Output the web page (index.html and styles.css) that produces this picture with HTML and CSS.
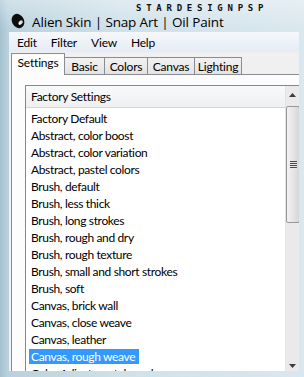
FILE: index.html
```html
<!DOCTYPE html>
<html>
<head>
<meta charset="utf-8">
<link rel="stylesheet" href="styles.css">
</head>
<body>
<div class="window">
  <div class="titlebar">
    <svg class="appicon" width="15" height="16" viewBox="0 0 15 16">
      <ellipse cx="7" cy="8" rx="6" ry="7.4" transform="rotate(-28 7 8)" fill="#0d0d0d"/>
      <ellipse cx="9.6" cy="9.6" rx="2.6" ry="1.8" transform="rotate(-45 9.6 9.6)" fill="#d9d9d9"/>
      <ellipse cx="9" cy="10.2" rx="1.2" ry="0.8" transform="rotate(-45 9 10.2)" fill="#fff"/>
    </svg>
    <span class="title">Alien Skin | Snap Art | Oil Paint</span>
    <span class="watermark">STARDESIGNPSP</span>
  </div>
  <div class="client">
    <div class="menubar">
      <span class="menu">Edit</span>
      <span class="menu">Filter</span>
      <span class="menu">View</span>
      <span class="menu">Help</span>
    </div>
    <div class="tabstrip">
      <div class="tab active w-settings">Settings</div>
      <div class="tab w-basic">Basic</div>
      <div class="tab w-colors">Colors</div>
      <div class="tab w-canvas">Canvas</div>
      <div class="tab w-lighting">Lighting</div>
    </div>
    <div class="panel">
      <div class="listbox">
        <div class="listmain">
          <div class="listhead">Factory Settings</div>
          <ul class="items">
            <li><span>Factory Default</span></li>
            <li><span>Abstract, color boost</span></li>
            <li><span>Abstract, color variation</span></li>
            <li><span>Abstract, pastel colors</span></li>
            <li><span>Brush, default</span></li>
            <li><span>Brush, less thick</span></li>
            <li><span>Brush, long strokes</span></li>
            <li><span>Brush, rough and dry</span></li>
            <li><span>Brush, rough texture</span></li>
            <li><span>Brush, small and short strokes</span></li>
            <li><span>Brush, soft</span></li>
            <li><span>Canvas, brick wall</span></li>
            <li><span>Canvas, close weave</span></li>
            <li><span>Canvas, leather</span></li>
            <li class="selected"><span>Canvas, rough weave</span></li>
            <li><span>Color Adjust, pastel overlay</span></li>
          </ul>
        </div>
        <div class="scrollbar">
          <div class="sb-btn">
            <svg width="7" height="4" viewBox="0 0 7 4"><path d="M0 4 L3.5 0 L7 4 Z" fill="#3c3c3c"/></svg>
          </div>
          <div class="sb-track">
            <div class="sb-thumb">
              <svg width="7" height="8" viewBox="0 0 7 8">
                <path d="M0 0.5 H7 M0 2.5 H7 M0 4.5 H7 M0 6.5 H7" stroke="#4a4a4a" stroke-width="1"/>
                <path d="M0 1.5 H7 M0 3.5 H7 M0 5.5 H7 M0 7.5 H7" stroke="#e8e8e8" stroke-width="1"/>
              </svg>
            </div>
          </div>
          <div class="sb-btn">
            <svg width="7" height="4" viewBox="0 0 7 4"><path d="M0 0 L3.5 4 L7 0 Z" fill="#3c3c3c"/></svg>
          </div>
        </div>
      </div>
    </div>
  </div>
</div>
</body>
</html>
```
FILE: styles.css
```css
* { box-sizing: border-box; }
html, body {
  margin: 0;
  padding: 0;
  width: 304px;
  height: 377px;
  overflow: hidden;
}
body {
  font-family: Lato, "Open Sans", sans-serif;
  color: #000;
}
.window {
  position: relative;
  width: 304px;
  height: 377px;
  background:
    linear-gradient(to bottom, rgba(255,255,255,0.35), rgba(255,255,255,0) 30px),
    linear-gradient(to right, #a3c2d0 0px, #b9d1dc 8px, #cfe1ea 120px, #d9e7ee 304px);
  display: flex;
  flex-direction: column;
}
.titlebar {
  height: 32px;
  display: flex;
  align-items: center;
  padding: 11px 0 0 11px;
}
.appicon { flex: none; margin-right: 6px; margin-top: -1px; }
.title {
  font-family: "Open Sans", sans-serif;
  font-size: 13.5px;
  letter-spacing: -0.15px;
  color: #000;
  white-space: nowrap;
}
.watermark {
  position: absolute;
  left: 136px;
  top: 3px;
  font-family: "DejaVu Sans Mono", monospace;
  font-weight: bold;
  font-size: 9px;
  letter-spacing: 4.75px;
  color: #111;
  line-height: 11px;
}
.client {
  margin-left: 9px;
  width: 290px;
  height: 339px;
  overflow: hidden;
  background: #f0f0f0;
}
.menubar {
  height: 20px;
  display: flex;
  align-items: center;
  padding-left: 1px;
  background: linear-gradient(to bottom, #f6f8fb, #e5ecf4);
  font-size: 12px;
  letter-spacing: -0.2px;
}
.menu { padding: 0 7px; }
.tabstrip {
  height: 22px;
  display: flex;
  align-items: flex-end;
  padding-left: 2px;
  font-size: 12px;
  letter-spacing: -0.2px;
}
.tab {
  height: 17px;
  border: 1px solid #898c95;
  border-bottom: none;
  background: linear-gradient(to bottom, #f2f2f2, #e3e3e3);
  display: flex;
  align-items: center;
  justify-content: center;
  margin-left: -1px;
}
.tab:first-child { margin-left: 0; }
.tab.active {
  height: 22px;
  margin-bottom: -1px;
  background: #fcfcfc;
  position: relative;
  z-index: 1;
  padding-bottom: 4px;
}
.w-settings { width: 54px; }
.w-basic { width: 41px; }
.w-colors { width: 44px; }
.w-canvas { width: 48px; }
.w-lighting { width: 48px; }
.panel {
  width: 310px;
  height: 300px;
  border-top: 1px solid #898c95;
  border-left: 1px solid #898c95;
  margin-left: 2px;
  background: #fcfcfc;
  padding: 10px 0 0 13px;
}
.listbox {
  width: 278px;
  height: 290px;
  border: 1px solid #828790;
  background: #fff;
  display: flex;
}
.listmain {
  flex: 1;
  min-width: 0;
  overflow: hidden;
}
.listhead {
  height: 22px;
  border-bottom: 1px solid #d5d5d5;
  background: linear-gradient(to bottom, #f8f9fa, #eef0f2);
  font-size: 12px;
  letter-spacing: -0.3px;
  line-height: 21px;
  padding-left: 5px;
}
.items {
  list-style: none;
  margin: 0;
  padding: 2px 0 0 3px;
  font-size: 12px;
  letter-spacing: -0.35px;
}
.items li {
  height: 17px;
  display: flex;
  align-items: center;
  white-space: nowrap;
}
.items li span {
  padding: 0 2px;
  line-height: 15px;
}
.items li.selected span {
  background: #3399ff;
  color: #fff;
  padding-right: 4px;
}
.scrollbar {
  width: 17px;
  flex: none;
  display: flex;
  flex-direction: column;
  background: #eaeaea;
  border-left: 1px solid #e3e3e3;
}
.sb-btn {
  height: 17px;
  display: flex;
  align-items: center;
  justify-content: center;
  padding-right: 3px;
}
.sb-track {
  flex: 1;
  padding-top: 3px;
}
.sb-thumb {
  height: 117px;
  width: 14px;
  border: 1px solid #979797;
  border-radius: 2px;
  background: linear-gradient(to right, #f2f2f2, #e6e6e6 50%, #d6d6d6);
  display: flex;
  align-items: center;
  justify-content: center;
}
```
